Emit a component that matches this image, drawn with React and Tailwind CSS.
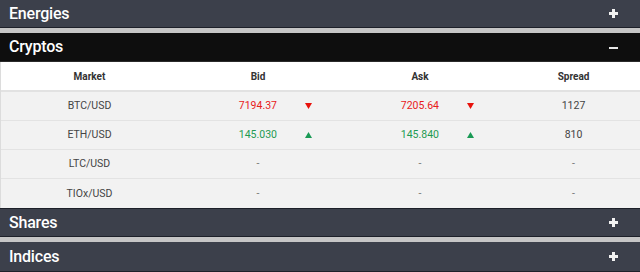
import React from "react";

function Plus() {
  return (
    <svg width="9" height="9" viewBox="0 0 9 9" className="block">
      <rect x="3" y="0" width="3" height="9" fill="#f2f2f2" />
      <rect x="0" y="3" width="9" height="3" fill="#f2f2f2" />
    </svg>
  );
}
function Minus() {
  return (
    <svg width="9" height="9" viewBox="0 0 9 9" className="block">
      <rect x="0" y="4" width="9" height="2" fill="#e6e6e6" />
    </svg>
  );
}
function Down() {
  return (
    <svg width="7" height="6" viewBox="0 0 7 6" className="block">
      <polygon points="0,0 7,0 3.5,6" fill="#e8120c" />
    </svg>
  );
}
function Up() {
  return (
    <svg width="7" height="6" viewBox="0 0 7 6" className="block">
      <polygon points="0,6 7,6 3.5,0" fill="#1a9a55" />
    </svg>
  );
}

function Bar({ title, open, h }) {
  return (
    <div
      className={
        h +
        " flex items-center justify-between pl-[9px] pr-[22px] border-b " +
        (open ? "bg-[#0e0e0e] border-[#2a2a2a]" : "bg-[#3c404b] border-[#1d2029]")
      }
    >
      <span className="text-[16px] font-medium text-white tracking-[-0.2px] font-['Roboto',sans-serif]">
        {title}
      </span>
      {open ? <Minus /> : <Plus />}
    </div>
  );
}

const rows = [
  { m: "BTC/USD", bid: "7194.37", ask: "7205.64", sp: "1127", dir: "down" },
  { m: "ETH/USD", bid: "145.030", ask: "145.840", sp: "810", dir: "up" },
  { m: "LTC/USD" },
  { m: "TIOx/USD" },
];

export default function App() {
  return (
    <div className="w-[640px] h-[272px] bg-[#c6c6c6] overflow-hidden font-['Roboto',sans-serif]">
      <Bar title="Energies" h="h-[28px]" />
      <div className="h-[5px]" />
      <Bar title="Cryptos" open h="h-[29px]" />
      <div className="bg-white border-l border-[#dcdcdc]">
        <div className="grid grid-cols-[177px_160px_164px_138px] h-[30px] items-center text-[10px] font-bold text-[#333] border-b-2 border-[#e2e2e2]">
          <div className="text-center">Market</div>
          <div className="text-center">Bid</div>
          <div className="text-center">Ask</div>
          <div className="text-center pl-[5px]">Spread</div>
        </div>
        {rows.map((r, i) => (
          <div
            key={r.m}
            className={
              "grid grid-cols-[177px_160px_164px_138px] h-[29px] items-center text-[10.5px] bg-[#f2f2f2] " +
              (i < rows.length - 1 ? "border-b border-[#e3e3e3]" : "")
            }
          >
            <div className="text-center text-[#444]">{r.m}</div>
            {r.bid ? (
              <>
                <div className="flex items-center">
                  <span
                    className={
                      "w-[99px] text-right " +
                      (r.dir === "down" ? "text-[#e8201a]" : "text-[#1f9a52]")
                    }
                  >
                    {r.bid}
                  </span>
                  <span className="ml-[28px]">{r.dir === "down" ? <Down /> : <Up />}</span>
                </div>
                <div className="flex items-center">
                  <span
                    className={
                      "w-[101px] text-right " +
                      (r.dir === "down" ? "text-[#e8201a]" : "text-[#1f9a52]")
                    }
                  >
                    {r.ask}
                  </span>
                  <span className="ml-[28px]">{r.dir === "down" ? <Down /> : <Up />}</span>
                </div>
                <div className="text-center pl-[5px] text-[#444]">{r.sp}</div>
              </>
            ) : (
              <>
                <div className="text-center text-[#777]">-</div>
                <div className="text-center text-[#777]">-</div>
                <div className="text-center pl-[5px] text-[#777]">-</div>
              </>
            )}
          </div>
        ))}
      </div>
      <div className="border-t border-[#1d2029]">
        <Bar title="Shares" h="h-[28px]" />
      </div>
      <div className="h-[5px]" />
      <Bar title="Indices" h="h-[30px]" />
    </div>
  );
}
